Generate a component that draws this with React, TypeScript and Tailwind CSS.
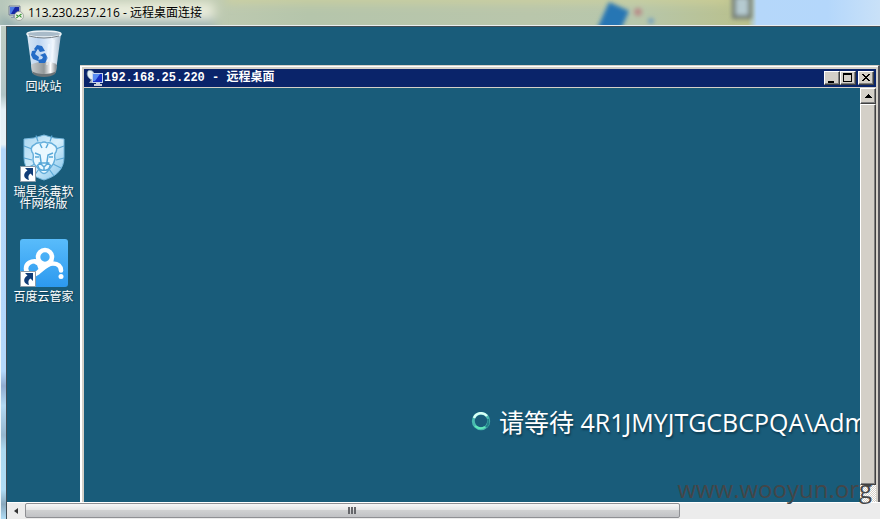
import type { ReactNode } from 'react';

const classicEdge =
  'border border-t-white border-l-white border-b-[#404040] border-r-[#404040] bg-[#d4d0c8] shadow-[inset_-1px_-1px_0_#808080]';

function RemoteIcon() {
  return (
    <svg viewBox="0 0 16 16" className="size-4 shrink-0" aria-hidden="true">
      <path d="M1 1h11v9H1z" fill="#b9c4dc" stroke="#59647f" strokeWidth=".7" />
      <path d="M2 2h9v7H2z" fill="#1727a4" />
      <path d="M2 2h5L3 9H2z" fill="#4c7ae4" />
      <path d="M5 10h3v2H5zM3 12h6v1H3z" fill="#8d99b4" />
      <circle cx="11" cy="11" r="4.5" fill="#eef0e8" stroke="#8b938c" strokeWidth=".7" />
      <path d="M8.3 9.7l2 1.6-2 1.7M13.5 9l-2 1.6 2 1.7" fill="none" stroke="#31922d" strokeWidth="1.1" />
    </svg>
  );
}

function SessionIcon() {
  return (
    <svg viewBox="0 0 18 18" className="size-[18px] shrink-0" aria-hidden="true">
      <path d="M2 7C1 3 4 1 7 2l3 8-4 2z" fill="#b7cbd8" />
      <ellipse cx="5" cy="6" rx="3.4" ry="5" transform="rotate(-28 5 6)" fill="#e5eff4" stroke="#8098ab" strokeWidth=".7" />
      <path d="M5 11l-2 3h5l-1-4" fill="#aab4bd" />
      <path d="M6 4h11v10H6z" fill="#c5d3ed" />
      <path d="M7 5h9v8H7z" fill="#1630c5" />
      <path d="M7 5h7l-5 7H7z" fill="#588cf2" />
      <path d="M10 14h4v1h2v2H8v-2h2z" fill="#cdd2da" />
    </svg>
  );
}

function BinIcon() {
  return (
    <svg viewBox="0 0 48 48" className="size-12" aria-hidden="true">
      <defs>
        <linearGradient id="bin" x1="0" x2="1">
          <stop stopColor="#d8e7f4" />
          <stop offset=".35" stopColor="#bdd5f1" />
          <stop offset=".75" stopColor="#edf5fd" />
          <stop offset="1" stopColor="#a7b9ca" />
        </linearGradient>
        <linearGradient id="binBase" x1="0" x2="1">
          <stop stopColor="#c9cccd" />
          <stop offset=".5" stopColor="#929899" />
          <stop offset=".75" stopColor="#fff" />
          <stop offset="1" stopColor="#777d80" />
        </linearGradient>
      </defs>
      <path d="M7 5h34l-5 37c-2 6-22 6-24 0z" fill="url(#bin)" />
      <path d="M11 36c6-4 19-5 26 0l-1 7c-3 5-22 5-24 0z" fill="url(#binBase)" />
      <path d="M12 42c4 4 20 4 24 0l-1 3c-5 4-17 4-22 0z" fill="#6d7578" />
      <ellipse cx="24" cy="5" rx="17" ry="3" fill="#a9bbc9" stroke="#edf3f6" strokeWidth="1.5" />
      <path d="M9 7q15 4 30 0" fill="none" stroke="#747d84" />
      <path d="M14 20l3-4 5 1 3 5-5 1-2-3-2 2zM12 22l5-1-2 4 4 3-1 4-5-2-2-4zM20 26l5-2 3 5-3 5h-6l-1-3 4-1 1-2z" fill="#246cc7" />
      <path d="M29 15l-2 21M34 11l-3 24" stroke="#f6faff" strokeWidth="2" opacity=".5" />
    </svg>
  );
}

function LionIcon() {
  return (
    <svg viewBox="0 0 48 48" className="size-12" aria-hidden="true">
      <defs>
        <linearGradient id="shield" x1="0" y1="0" x2="1" y2="1">
          <stop stopColor="#a9d6f0" />
          <stop offset=".5" stopColor="#d6effc" />
          <stop offset="1" stopColor="#7cc0e8" />
        </linearGradient>
      </defs>
      <path d="M4 5Q14 5 24 1q10 4 20 4v18c0 12-7 19-20 23C11 42 4 35 4 23z" fill="url(#shield)" stroke="#78b9de" />
      <path d="M16 1.5l2 6M32 1.5l-2 6M4 12l8 3M44 12l-8 3M4 24l8 2M44 24l-8 2M7 34l8-4M41 34l-8-4M14 42l5-7M34 42l-5-7" stroke="#5ba8d6" strokeWidth="1.2" fill="none" />
      <path d="M14 11q3-3 7-2 3-2 6 0 4-1 7 2 4 2 2 7-2 2-1 7-1 5-4 8l-4 5q-3 3-6 0l-4-5q-4-3-4-8 1-5-1-7-2-5 2-7z" fill="#e9f8ff" stroke="#64aedb" strokeWidth="1.4" />
      <g fill="none" stroke="#57a8d8" strokeWidth="1.5">
        <path d="M15 19l5 2 1 7-4 4M33 19l-5 2-1 7 4 4M15 23h4M33 23h-4M20 29h8l-4 4zM24 33v3M18 32q1 5 6 4 5 1 6-4" />
        <path d="M20 10l2 4M28 10l-2 4" />
      </g>
    </svg>
  );
}

function CloudIcon() {
  return (
    <svg viewBox="0 0 48 48" className="size-12" aria-hidden="true">
      <defs>
        <linearGradient id="cloud" x2="0" y2="1">
          <stop stopColor="#59bcfb" />
          <stop offset="1" stopColor="#2c99ef" />
        </linearGradient>
      </defs>
      <rect width="48" height="48" rx="3" fill="url(#cloud)" />
      <g fill="none" stroke="#fff" strokeWidth="4.6" strokeLinecap="round">
        <circle cx="25" cy="18" r="7" />
        <path d="M17 22.500c-6-1-11 2-11 7 0 6 7 8 12 4 5-4 9-9 15-9 5 0 8 3 8 7" />
        <path d="M16 23c3 1 4 3 4 5" />
      </g>
      <circle cx="41" cy="37.500" r="2.500" fill="#fff" />
    </svg>
  );
}

function ShortcutBadge() {
  return (
    <svg viewBox="0 0 16 16" className="absolute bottom-0 left-0 size-4" aria-hidden="true">
      <path d="M.5.5h15v15H.5z" fill="#fff" stroke="#8b9aa8" />
      <path d="M5 2h8v8l-2.500-2.500C8 9 8 11 9 14 4 13 2 8 7.500 4.500z" fill="#123d78" />
    </svg>
  );
}

function DesktopItem({ icon, shortcut = false, lines }: { icon: ReactNode; shortcut?: boolean; lines: string[] }) {
  return (
    <button type="button" className="flex h-[105px] w-full flex-col items-center text-xs leading-3 text-white">
      <span className="relative mb-1 block size-12">
        {icon}
        {shortcut && <ShortcutBadge />}
      </span>
      {lines.map((line) => (
        <span key={line} className="block whitespace-nowrap [text-shadow:1px_1px_1px_#123c50]">{line}</span>
      ))}
    </button>
  );
}

function CaptionButton({ label, children }: { label: string; children: ReactNode }) {
  return (
    <button type="button" aria-label={label} className={`h-[14px] w-4 ${classicEdge}`}>
      <svg viewBox="0 0 14 12" className="h-3 w-[14px]" shapeRendering="crispEdges" aria-hidden="true">
        {children}
      </svg>
    </button>
  );
}

function SessionWindow() {
  return (
    <section className="mt-[38px] flex min-w-0 flex-1 flex-col border-t border-r-2 border-t-[#d4d0c8] border-r-[#55555a] bg-[#d4d0c8]">
      <div className="flex min-h-0 flex-1 flex-col border-t border-l-2 border-white pt-0.5 pr-0.5 pl-0.5">
        <header className="flex h-[18px] shrink-0 items-center bg-[#0a246a] pr-0.5 pl-0.5">
          <SessionIcon />
          <h2 className="flex-1 whitespace-pre font-['Liberation_Mono','Noto_Sans_CJK_SC',monospace] text-xs leading-[18px] font-bold text-white">
            192.168.25.220 - 远程桌面
          </h2>
          <div className="flex">
            <CaptionButton label="Minimize"><path d="M3 9h6v2H3z" /></CaptionButton>
            <CaptionButton label="Maximize"><path d="M2 1h9v9H2zM3 3v6h7V3z" fillRule="evenodd" /></CaptionButton>
            <span className="w-0.5" />
            <CaptionButton label="Close">
              <path d="M3 2h2v1h1v1h2V3h1V2h2v1h-1v1H9v1H8v1h1v1h1v1h1v1H9V8H8V7H6v1H5v1H3V8h1V7h1V6h1V5H5V4H4V3H3z" />
            </CaptionButton>
          </div>
        </header>
        <div className="mt-px flex min-h-0 flex-1 bg-[#195c7a]">
          <div className="flex min-w-0 flex-1 flex-col justify-end overflow-hidden pb-16 pl-[387px]">
            <div role="status" className="flex items-center gap-2 text-[25px] leading-8 whitespace-nowrap text-white">
              <svg viewBox="0 0 20 20" className="size-5 shrink-0" aria-hidden="true">
                <circle cx="10" cy="9" r="7.700" fill="none" stroke="#49b9af" strokeWidth="3" />
                <path d="M3 6a7.700 7.700 0 0 1 13-2" fill="none" stroke="#d9fff7" strokeWidth="2.500" />
                <path d="M17 7a7.700 7.700 0 0 1-2 8" fill="none" stroke="#207f88" strokeWidth="2" />
                <path d="M4 14q5 4 10 1" fill="none" stroke="#5ee8ba" strokeWidth="2" />
              </svg>
              <span className="[text-shadow:1px_2px_2px_#103c50]">请等待 4R1JMYJTGCBCPQA\Administrator</span>
            </div>
          </div>
          <div className="flex w-4 shrink-0 flex-col bg-[repeating-conic-gradient(#d4d0c8_0_25%,#fff_0_50%)] bg-[length:2px_2px]">
            <button type="button" aria-label="Scroll up" className={`flex h-4 items-center justify-center ${classicEdge}`}>
              <svg viewBox="0 0 7 4" className="h-1 w-[7px]" shapeRendering="crispEdges" aria-hidden="true">
                <path d="M3 0h1v1h1v1h1v1h1v1H0V3h1V2h1V1h1z" />
              </svg>
            </button>
            <div className={`mb-[17px] flex-1 ${classicEdge}`} />
          </div>
        </div>
      </div>
    </section>
  );
}

function GlassTitle() {
  return (
    <header className="relative flex h-[26px] shrink-0 items-center overflow-hidden border-b border-[#e9eef0] bg-[linear-gradient(90deg,#b7c7bb_0%,#c3cdb4_18%,#b5c5ab_35%,#b9c6ab_60%,#b7c7ac_72%,#b9c08c_85%,#b5d7fa_86%,#b4d7fb_94%,#c9e1f8_100%)] pl-2">
      <svg className="absolute inset-0 size-full" aria-hidden="true">
        <defs>
          <filter id="soft"><feGaussianBlur stdDeviation="2" /></filter>
          <filter id="wide"><feGaussianBlur stdDeviation="6" /></filter>
        </defs>
        <g filter="url(#wide)">
          <path d="M0 18h215v12H0z" fill="#83a2a8" />
          <path d="M14 3h200v17H14z" fill="#eef0df" />
          <path d="M225-5h505v6H225z" fill="#dbd795" />
        </g>
        <g filter="url(#soft)">
          <path d="M609 2l20 9-8 18h-24z" fill="#2676b4" />
          <circle cx="638" cy="12" r="4" fill="#b88e89" />
          <circle cx="651" cy="21" r="3" fill="#719fc0" />
          <path d="M734-4h16v21h-16z" fill="#b5cad0" stroke="#727b75" strokeWidth="4" />
        </g>
      </svg>
      <div className="relative flex items-center gap-1">
        <RemoteIcon />
        <h1 className="text-xs leading-4 whitespace-nowrap text-black">113.230.237.216 - 远程桌面连接</h1>
      </div>
    </header>
  );
}

export default function App() {
  return (
    <main className="relative flex h-screen flex-col overflow-hidden bg-[#b0dcf5] font-['Open_Sans','Noto_Sans_CJK_SC',sans-serif]">
      <GlassTitle />
      <div className="flex min-h-0 flex-1">
        <div className="w-[6px] shrink-0 border-l border-[#eef7fb] bg-[linear-gradient(#c1cec4_0%,#b1c5c7_14%,#e5f1f7_17%,#e7f2f7_24%,#b3d7fa_25%,#b4d8fb_70%,#91acd0_73%,#b2d9f3_77%,#96b7cf_83%,#add9f0_86%,#b0dcf5_94%,#89a8bd_97%,#b0dcf5_100%)]" />
        <div className="flex min-w-0 flex-1 flex-col border-t border-l border-[#414e56]">
          <div className="flex min-h-0 flex-1 bg-[#195c7a]">
            <nav aria-label="Desktop" className="w-[73px] shrink-0 pt-[2px]">
              <DesktopItem icon={<BinIcon />} lines={['回收站']} />
              <DesktopItem icon={<LionIcon />} shortcut lines={['瑞星杀毒软', '件网络版']} />
              <DesktopItem icon={<CloudIcon />} shortcut lines={['百度云管家']} />
            </nav>
            <SessionWindow />
          </div>
          <div className="flex h-[17px] shrink-0 border-t border-white bg-[#ececec] pb-px">
            <button type="button" aria-label="Scroll left" className="flex w-[18px] items-center justify-center">
              <svg viewBox="0 0 5 8" className="h-2 w-[5px]" aria-hidden="true"><path d="M4 1v6L0 4z" fill="#333" /></svg>
            </button>
            <div className="flex w-3/4 items-center justify-center gap-px rounded-xs border border-[#8f9094] bg-[linear-gradient(#f7f7f7_0%,#e5e5e6_45%,#cfd0d1_50%,#c1c2c5_100%)]">
              <span className="h-[7px] w-0.5 bg-[#65666a]" />
              <span className="h-[7px] w-0.5 bg-[#65666a]" />
              <span className="h-[7px] w-0.5 bg-[#65666a]" />
            </div>
          </div>
        </div>
      </div>
      <p className="pointer-events-none absolute right-2 bottom-[14px] text-2xl leading-8 text-[#444648]">www.wooyun.org</p>
    </main>
  );
}
